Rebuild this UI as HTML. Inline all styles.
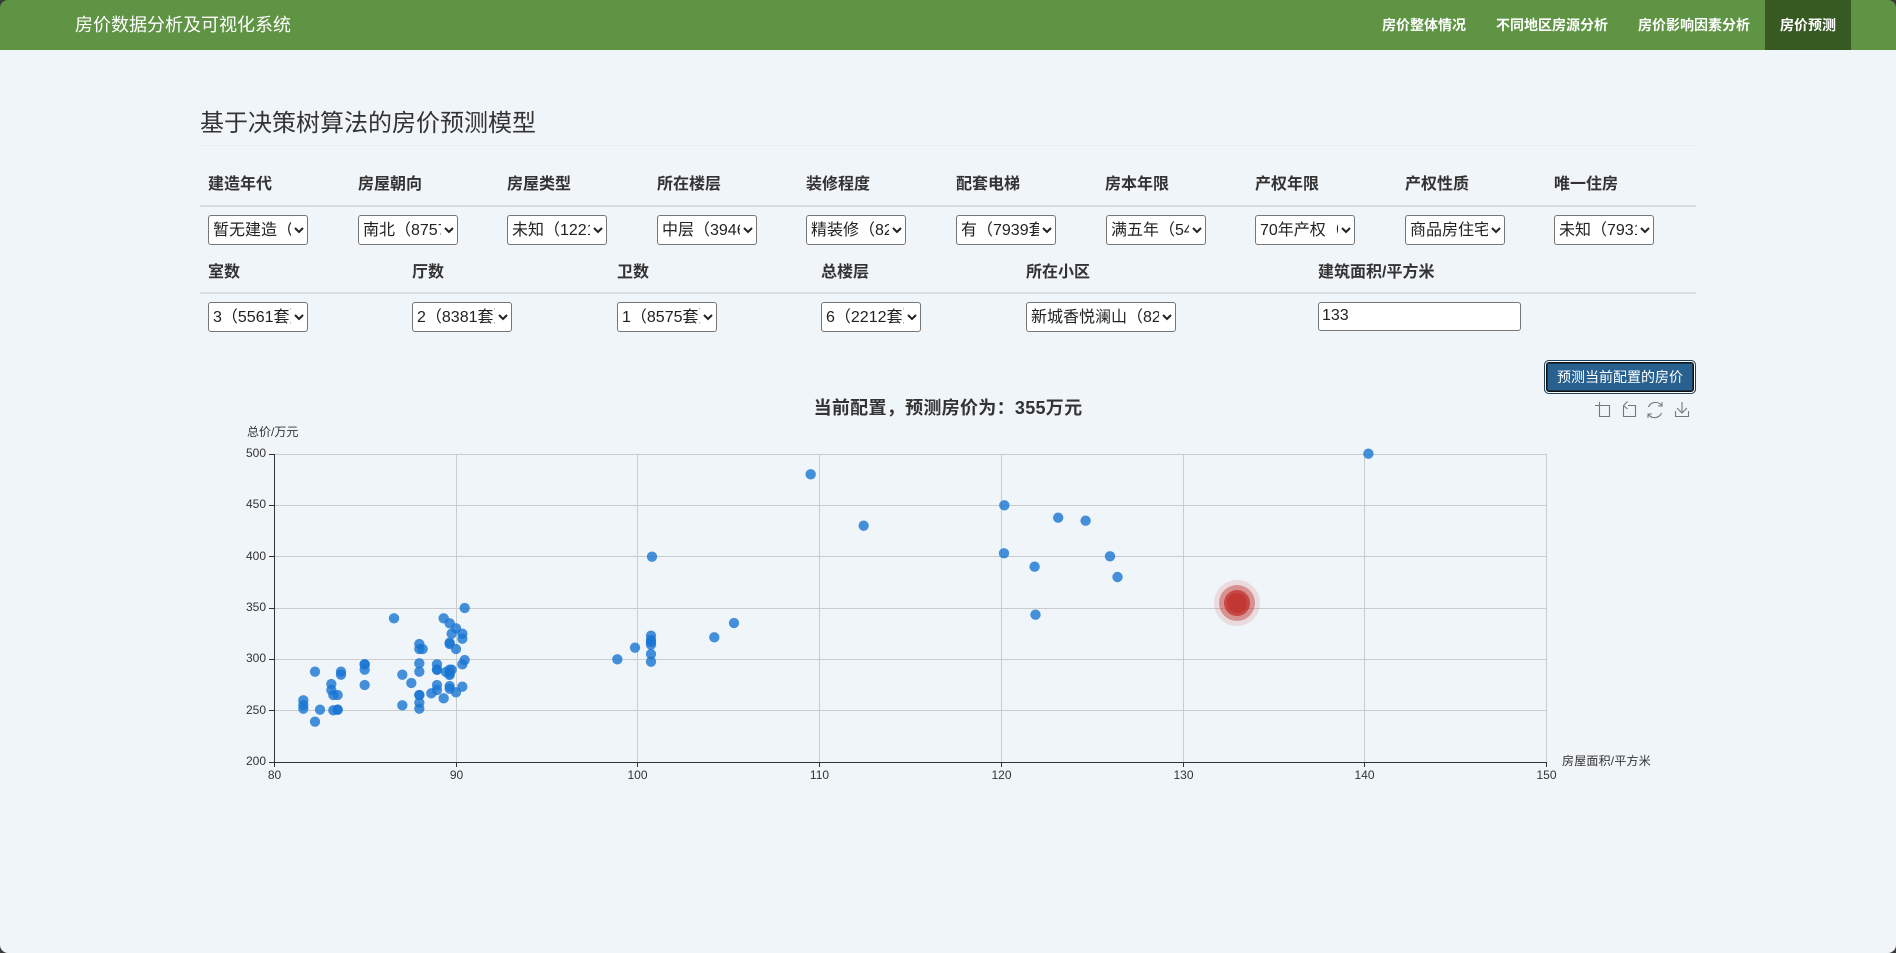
<!DOCTYPE html>
<html lang="zh-CN">
<head>
<meta charset="utf-8">
<title>房价预测</title>
<style>
html,body{margin:0;padding:0;width:1896px;height:953px;overflow:hidden;background:#f0f5f9;}
body{position:relative;font-family:"Liberation Sans","Noto Sans CJK SC",sans-serif;color:#333;}
.a{position:absolute;white-space:nowrap;}
#hd{left:0;top:0;width:1896px;height:50px;background:#5e9444;}
#act{left:1765px;top:0;width:86px;height:50px;background:#375a23;}
.nav{top:15px;line-height:20px;font-size:14px;font-weight:bold;color:#fff;}
#brand{left:75px;top:12px;line-height:26px;font-size:18px;color:#fff;}
#ttl{left:200px;top:107px;line-height:34px;font-size:24px;color:#333;}
#dv{left:200px;top:145px;width:1496px;height:1px;background:#e9edf0;}
.th{font-size:16px;font-weight:bold;line-height:22px;color:#333;}
.r1{top:174px;}
.r2{top:262px;}
.ln{left:200px;width:1496px;height:2px;background:#ddd;}
select{position:absolute;height:30px;width:100px;box-sizing:border-box;margin:0;font:16px "Liberation Sans","Noto Sans CJK SC",sans-serif;background:#fff;color:#222;border:1px solid #767676;border-radius:3px;padding:0;}
input{position:absolute;left:1318px;top:302px;width:203px;height:29px;box-sizing:border-box;margin:0;padding:0 3px 1px;font:16px "Liberation Sans","Noto Sans CJK SC",sans-serif;background:#fff;color:#222;border:1px solid #767676;border-radius:3px;}
#btn{left:1544px;top:360px;width:152px;height:34px;box-sizing:border-box;border-radius:5px;background:#286090;box-shadow:inset 0 0 0 1px #1c4060,inset 0 0 0 2px #fff,inset 0 0 0 3.5px #111;color:#fff;font-size:14px;line-height:35px;text-align:center;}
svg{position:absolute;left:0;top:0;}
svg text{font-family:"Liberation Sans","Noto Sans CJK SC",sans-serif;}
</style>
</head>
<body>
<div class="a" id="hd"></div>
<div class="a" id="act"></div>
<div class="a" id="brand">房价数据分析及可视化系统</div>
<div class="a nav" style="left:1382px">房价整体情况</div>
<div class="a nav" style="left:1496px">不同地区房源分析</div>
<div class="a nav" style="left:1638px">房价影响因素分析</div>
<div class="a nav" style="left:1780px">房价预测</div>

<div class="a" id="ttl">基于决策树算法的房价预测模型</div>
<div class="a" id="dv"></div>

<div class="a th r1" style="left:208px">建造年代</div>
<div class="a th r1" style="left:358px">房屋朝向</div>
<div class="a th r1" style="left:507px">房屋类型</div>
<div class="a th r1" style="left:657px">所在楼层</div>
<div class="a th r1" style="left:806px">装修程度</div>
<div class="a th r1" style="left:956px">配套电梯</div>
<div class="a th r1" style="left:1105px">房本年限</div>
<div class="a th r1" style="left:1255px">产权年限</div>
<div class="a th r1" style="left:1405px">产权性质</div>
<div class="a th r1" style="left:1554px">唯一住房</div>
<div class="a ln" style="top:205px"></div>

<select style="left:208px;top:215px"><option>暂无建造（1024套）</option></select>
<select style="left:358px;top:215px"><option>南北（8757套）</option></select>
<select style="left:507px;top:215px"><option>未知（1221套）</option></select>
<select style="left:657px;top:215px"><option>中层（3946套）</option></select>
<select style="left:806px;top:215px"><option>精装修（8245套）</option></select>
<select style="left:956px;top:215px"><option>有（7939套）</option></select>
<select style="left:1106px;top:215px"><option>满五年（5432套）</option></select>
<select style="left:1255px;top:215px"><option>70年产权（9120套）</option></select>
<select style="left:1405px;top:215px"><option>商品房住宅（9000套）</option></select>
<select style="left:1554px;top:215px"><option>未知（7931套）</option></select>

<div class="a th r2" style="left:208px">室数</div>
<div class="a th r2" style="left:412px">厅数</div>
<div class="a th r2" style="left:617px">卫数</div>
<div class="a th r2" style="left:821px">总楼层</div>
<div class="a th r2" style="left:1026px">所在小区</div>
<div class="a th r2" style="left:1318px">建筑面积/平方米</div>
<div class="a ln" style="top:292px"></div>

<select style="left:208px;top:302px"><option>3（5561套）</option></select>
<select style="left:412px;top:302px"><option>2（8381套）</option></select>
<select style="left:617px;top:302px"><option>1（8575套）</option></select>
<select style="left:821px;top:302px"><option>6（2212套）</option></select>
<select style="left:1026px;top:302px;width:150px"><option>新城香悦澜山（82套）</option></select>
<input type="text" value="133">

<div class="a" id="btn">预测当前配置的房价</div>

<svg width="1896" height="953" viewBox="0 0 1896 953">
  <text x="948" y="414" text-anchor="middle" font-size="18" font-weight="bold" fill="#333" letter-spacing=".3">当前配置，预测房价为：355万元</text>

  <!-- toolbox -->
  <g fill="none" stroke="#777" stroke-width="1.1">
    <path d="M1595 405.5H1609.5V416.5H1599.5V402"/>
    <path d="M1628 405.5H1635.5V416.5H1623.5V405.5M1623.5 405.5L1627.5 401.5M1623.5 405.5L1627.5 409"/>
    <path d="M1648.5 407A7.5 7.5 0 0 1 1661.5 405.5M1662 402V406H1658M1661.5 413A7.5 7.5 0 0 1 1648.5 414.5M1648 418V414H1652"/>
    <path d="M1682 402V413M1677 408L1682 413L1687 408M1675.5 411V416.5H1688.5V411"/>
  </g>

  <!-- grid -->
  <g stroke="#ccc" stroke-width="1" fill="none">
    <path d="M274 454.5H1546.5M274 505.5H1546.5M274 556.5H1546.5M274 608.5H1546.5M274 659.5H1546.5M274 710.5H1546.5"/>
    <path d="M456.5 454V762M637.5 454V762M819.5 454V762M1001.5 454V762M1183.5 454V762M1364.5 454V762M1546.5 454V762"/>
  </g>
  <!-- axes -->
  <g stroke="#333" stroke-width="1" fill="none">
    <path d="M274.5 454V762.5M274 762.5H1546.5"/>
    <path d="M269 454.5H274M269 505.5H274M269 556.5H274M269 608.5H274M269 659.5H274M269 710.5H274M269 762.5H274"/>
    <path d="M274.5 762V767M456.5 762V767M637.5 762V767M819.5 762V767M1001.5 762V767M1183.5 762V767M1364.5 762V767M1546.5 762V767"/>
  </g>
  <g font-size="12" fill="#333" text-anchor="end">
    <text x="266" y="457">500</text><text x="266" y="508">450</text><text x="266" y="560">400</text>
    <text x="266" y="611">350</text><text x="266" y="662">300</text><text x="266" y="714">250</text><text x="266" y="765">200</text>
  </g>
  <g font-size="12" fill="#333" text-anchor="middle">
    <text x="274.5" y="779">80</text><text x="456.5" y="779">90</text><text x="637.5" y="779">100</text>
    <text x="819.5" y="779">110</text><text x="1001.5" y="779">120</text><text x="1183.5" y="779">130</text>
    <text x="1364.5" y="779">140</text><text x="1546.5" y="779">150</text>
  </g>
  <text x="247" y="436" font-size="12" fill="#333">总价/万元</text>
  <text x="1562" y="765" font-size="12" fill="#333" letter-spacing=".2">房屋面积/平方米</text>

  <!-- scatter: left cluster -->
  <g transform="translate(230 420) scale(.33333)" fill="rgba(25,118,210,.8)">
    <circle cx="704" cy="564" r="15.5"/><circle cx="492" cy="595" r="15.5"/><circle cx="641" cy="595" r="15.5"/>
    <circle cx="659" cy="610" r="15.5"/><circle cx="678" cy="625" r="15.5"/><circle cx="697" cy="641" r="15.5"/>
    <circle cx="665" cy="641" r="15.5"/><circle cx="697" cy="656" r="15.5"/><circle cx="568" cy="672" r="15.5"/>
    <circle cx="659" cy="668" r="15.5"/><circle cx="659" cy="672" r="15.5"/><circle cx="568" cy="687" r="15.5"/>
    <circle cx="578" cy="687" r="15.5"/><circle cx="678" cy="687" r="15.5"/><circle cx="704" cy="720" r="15.5"/>
    <circle cx="697" cy="733" r="15.5"/><circle cx="568" cy="730" r="15.5"/><circle cx="621" cy="733" r="15.5"/>
    <circle cx="404" cy="733" r="15.5"/><circle cx="404" cy="733" r="15.5"/><circle cx="404" cy="749" r="15.5"/>
    <circle cx="621" cy="749" r="15.5"/><circle cx="621" cy="749" r="15.5"/><circle cx="665" cy="749" r="15.5"/>
    <circle cx="659" cy="749" r="15.5"/><circle cx="648" cy="756" r="15.5"/><circle cx="568" cy="755" r="15.5"/>
    <circle cx="255" cy="755" r="15.5"/><circle cx="333" cy="755" r="15.5"/><circle cx="333" cy="764" r="15.5"/>
    <circle cx="517" cy="764" r="15.5"/><circle cx="659" cy="760" r="15.5"/><circle cx="659" cy="765" r="15.5"/>
    <circle cx="544" cy="789" r="15.5"/><circle cx="304" cy="792" r="15.5"/><circle cx="404" cy="795" r="15.5"/>
    <circle cx="621" cy="795" r="15.5"/><circle cx="659" cy="798" r="15.5"/><circle cx="697" cy="800" r="15.5"/>
    <circle cx="304" cy="810" r="15.5"/><circle cx="621" cy="810" r="15.5"/><circle cx="659" cy="806" r="15.5"/>
    <circle cx="604" cy="820" r="15.5"/><circle cx="678" cy="817" r="15.5"/><circle cx="310" cy="825" r="15.5"/>
    <circle cx="323" cy="825" r="15.5"/><circle cx="568" cy="825" r="15.5"/><circle cx="568" cy="825" r="15.5"/>
    <circle cx="641" cy="835" r="15.5"/><circle cx="220" cy="841" r="15.5"/><circle cx="568" cy="848" r="15.5"/>
    <circle cx="220" cy="855" r="15.5"/><circle cx="517" cy="856" r="15.5"/><circle cx="220" cy="866" r="15.5"/>
    <circle cx="568" cy="866" r="15.5"/><circle cx="270" cy="869" r="15.5"/><circle cx="310" cy="871" r="15.5"/>
    <circle cx="323" cy="869" r="15.5"/><circle cx="323" cy="869" r="15.5"/><circle cx="255" cy="905" r="15.5"/>
  </g>
  <!-- scatter: middle -->
  <g transform="translate(530 420) scale(.33333)" fill="rgba(25,118,210,.8)">
    <circle cx="842" cy="163" r="15.5"/><circle cx="1001" cy="317" r="15.5"/><circle cx="1423" cy="256" r="15.5"/>
    <circle cx="1422" cy="400" r="15.5"/><circle cx="366" cy="410" r="15.5"/><circle cx="612" cy="609" r="15.5"/>
    <circle cx="553" cy="652" r="15.5"/><circle cx="363" cy="647" r="15.5"/><circle cx="363" cy="660" r="15.5"/>
    <circle cx="363" cy="666" r="15.5"/><circle cx="363" cy="674" r="15.5"/><circle cx="315" cy="683" r="15.5"/>
    <circle cx="363" cy="702" r="15.5"/><circle cx="262" cy="718" r="15.5"/><circle cx="363" cy="725" r="15.5"/>
  </g>
  <!-- scatter: right -->
  <g fill="rgba(25,118,210,.8)">
    <circle cx="1368.4" cy="453.7" r="5.2"/><circle cx="1058.2" cy="517.7" r="5.2"/><circle cx="1085.6" cy="520.7" r="5.2"/>
    <circle cx="1110" cy="556.3" r="5.2"/><circle cx="1117.5" cy="577" r="5.2"/><circle cx="1034.6" cy="566.7" r="5.2"/>
    <circle cx="1035.5" cy="614.7" r="5.2"/>
  </g>
  <!-- predicted point -->
  <g fill="#c23531">
    <circle cx="1237" cy="603" r="23" fill-opacity=".13"/>
    <circle cx="1237" cy="603" r="18" fill-opacity=".45"/>
    <circle cx="1237" cy="603" r="13" fill-opacity=".8"/>
    <circle cx="1237" cy="603" r="10" fill-opacity=".8"/>
  </g>

  <!-- window corners -->
  <path fill="#3a3a3a" fill-rule="evenodd" d="M0 0H1896V953H0ZM8 0A8 8 0 0 0 0 8V945A8 8 0 0 0 8 953H1888A8 8 0 0 0 1896 945V8A8 8 0 0 0 1888 0Z"/>
</svg>
</body>
</html>
